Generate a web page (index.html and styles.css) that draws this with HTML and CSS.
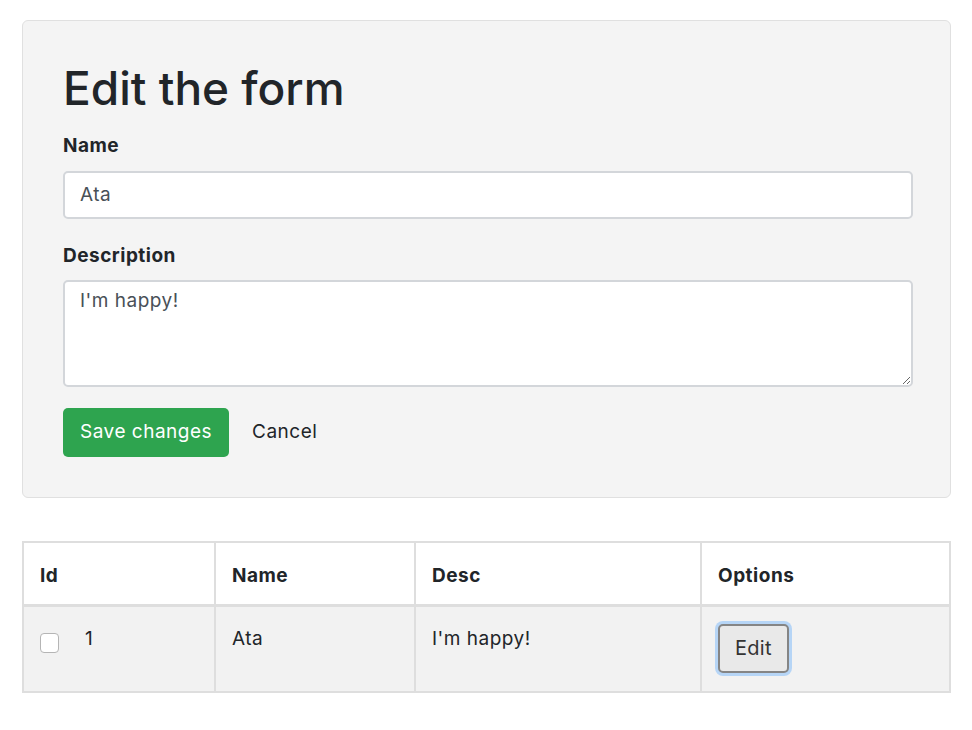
FILE: index.html
```html
<!DOCTYPE html>
<html lang="en">
<head>
<meta charset="utf-8">
<title>Edit the form</title>
<link rel="stylesheet" href="styles.css">
</head>
<body>
  <div class="card">
    <h1 class="title">Edit the form</h1>
    <div class="group">
      <label class="label" for="name">Name</label>
      <input class="field" id="name" type="text" value="Ata">
    </div>
    <div class="group group-last">
      <label class="label" for="desc">Description</label>
      <textarea class="field area" id="desc">I'm happy!</textarea>
    </div>
    <div class="actions">
      <button class="btn-save" type="button">Save changes</button>
      <button class="btn-link" type="button">Cancel</button>
    </div>
  </div>

  <table class="grid">
    <colgroup>
      <col class="c1"><col class="c2"><col class="c3"><col class="c4">
    </colgroup>
    <thead>
      <tr><th>Id</th><th>Name</th><th>Desc</th><th>Options</th></tr>
    </thead>
    <tbody>
      <tr>
        <td><span class="idcell"><input class="check" type="checkbox"><span>1</span></span></td>
        <td>Ata</td>
        <td>I'm happy!</td>
        <td><button class="btn-edit" type="button">Edit</button></td>
      </tr>
    </tbody>
  </table>
</body>
</html>
```
FILE: styles.css
```css
* { box-sizing: border-box; }

body {
  margin: 0;
  padding: 20px 21px 40px 22px;
  font-family: Inter, "Noto Sans", "Liberation Sans", sans-serif;
  font-size: 19px;
  line-height: 1.5;
  letter-spacing: 0.5px;
  color: #212529;
  background: #ffffff;
}

.card {
  width: 929px;
  background: #f4f4f4;
  border: 1px solid #e0e0e0;
  border-radius: 6px;
  padding: 40px 39px 40px 40px;
}

.title {
  margin: 0 0 16px;
  font-size: 46px;
  font-weight: 500;
  line-height: 1.2;
  letter-spacing: 0;
}

.group { margin-bottom: 23px; }
.group-last { margin-bottom: 21px; }

.label {
  display: block;
  font-weight: 700;
  margin-bottom: 10px;
}

.field {
  display: block;
  width: 850px;
  height: 48px;
  margin: 0;
  padding: 0 15px;
  font: inherit;
  letter-spacing: inherit;
  color: #495057;
  background: #fff;
  border: 2px solid #d3d6da;
  border-radius: 5px;
  outline: none;
}

.area {
  height: 107px;
  padding: 5px 15px;
  resize: vertical;
}

.actions {
  display: flex;
  align-items: center;
  gap: 6px;
}

.btn-save {
  height: 49px;
  padding: 0 17px;
  font: inherit;
  letter-spacing: inherit;
  color: #fff;
  background: #2ea44f;
  border: 0;
  border-radius: 5px;
}

.btn-link {
  height: 49px;
  padding: 0 17px;
  font: inherit;
  letter-spacing: inherit;
  color: #212529;
  background: transparent;
  border: 0;
}

.grid {
  margin-top: 43px;
  width: 929px;
  border-collapse: collapse;
  table-layout: fixed;
  border: 2px solid #dedede;
}

.c1 { width: 192px; }
.c2 { width: 200px; }
.c3 { width: 286px; }
.c4 { width: 249px; }

.grid th,
.grid td {
  border: 2px solid #dedede;
  text-align: left;
  vertical-align: top;
  padding: 18px 16px;
}

.grid th {
  font-weight: 700;
  padding-top: 19px;
  padding-bottom: 13px;
  border-bottom-width: 3px;
  background: #fff;
}

.grid tbody td {
  background: #f2f2f2;
  padding-top: 18px;
  padding-bottom: 18px;
}

.idcell {
  display: inline-flex;
  align-items: flex-start;
  gap: 26px;
}

.check {
  appearance: none;
  -webkit-appearance: none;
  width: 19px;
  height: 20px;
  margin: 8px 0 0 0;
  background: #fff;
  border: 1px solid #b5b5b5;
  border-radius: 4px;
}

.btn-edit {
  height: 49px;
  margin-top: -1px;
  padding: 0 15px;
  font: inherit;
  letter-spacing: 0.3px;
  font-size: 20px;
  color: #333;
  background: #e9e9e9;
  border: 2px solid #858585;
  border-radius: 5px;
  box-shadow: 0 0 0 3px #b6d5f6;
}
```
